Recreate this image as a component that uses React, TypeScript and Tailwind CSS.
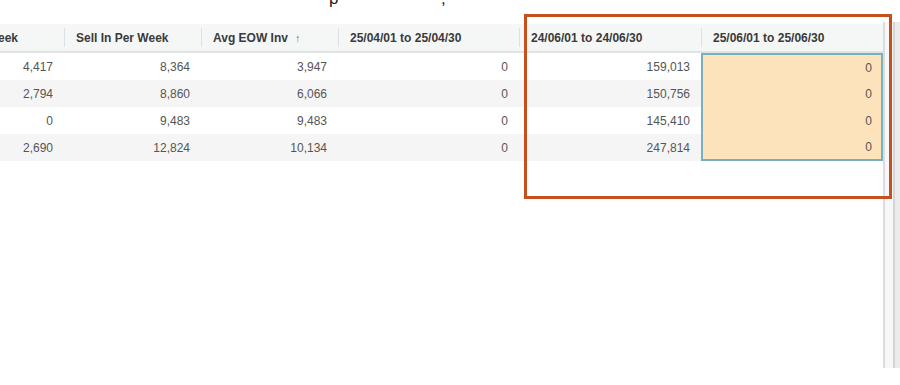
import React from "react";

type Col = { key: string; title: string; width: string };

const columns: Col[] = [
  { key: "sellOut", title: "Sell Out Per Week", width: "w-[64px]" },
  { key: "sellIn", title: "Sell In Per Week", width: "w-[137px]" },
  { key: "avgEow", title: "Avg EOW Inv", width: "w-[137px]" },
  { key: "apr25", title: "25/04/01 to 25/04/30", width: "w-[181px]" },
  { key: "jun24", title: "24/06/01 to 24/06/30", width: "w-[182px]" },
  { key: "jun25", title: "25/06/01 to 25/06/30", width: "w-[182px]" },
];

const rows = [
  ["4,417", "8,364", "3,947", "0", "159,013", "0"],
  ["2,794", "8,860", "6,066", "0", "150,756", "0"],
  ["0", "9,483", "9,483", "0", "145,410", "0"],
  ["2,690", "12,824", "10,134", "0", "247,814", "0"],
];

export default function App() {
  return (
    <div className="relative w-[900px] h-[385px] overflow-hidden bg-white font-['Liberation_Sans',Arial,sans-serif]">
      {/* caption above the grid, mostly scrolled out of view */}
      <div className="absolute top-[-14px] left-[329px] text-[17px] text-[#222]">p</div>
      <div className="absolute top-[-14px] left-[441px] text-[17px] text-[#222]">,</div>

      <div className="flex pt-[22px] h-[368px]">
        <div className="w-[883px] pt-[2px]">
          <div className="flex h-[29px] bg-[#f5f7f7] border-b-2 border-[#dfe3e3] text-[12px] font-bold text-[#3a3a3a]">
            {columns.map((c, i) => (
              <div key={c.key} className={`${c.width} flex items-center shrink-0 overflow-hidden`}>
                {i === 0 ? (
                  <div className="flex w-full justify-end pr-[46px] whitespace-nowrap">{c.title}</div>
                ) : (
                  <>
                    <div className="w-px h-[19px] bg-[#dde1e1] shrink-0" />
                    <span className="ml-[11px] whitespace-nowrap">
                      {c.title}
                      {c.key === "avgEow" && <span className="ml-[7px] text-[11px] font-normal text-[#777]">↑</span>}
                    </span>
                  </>
                )}
              </div>
            ))}
          </div>

          {rows.map((r, ri) => (
            <div key={ri} className={`flex h-[27px] text-[12px] text-[#555] ${ri % 2 === 1 ? "bg-[#f5f5f5]" : "bg-white"}`}>
              {r.map((v, ci) => {
                const selected = ci === 5;
                let sel = "";
                if (selected) {
                  sel = "bg-[#fde3bb] border-x-2 border-[#79b0c0]";
                  if (ri === 0) sel += " border-t-2";
                  if (ri === rows.length - 1) sel += " border-b-2";
                }
                return (
                  <div
                    key={ci}
                    className={`${columns[ci].width} shrink-0 flex items-center justify-end ${selected ? "pr-[9px]" : "pr-[11px]"} ${sel}`}
                  >
                    {v}
                  </div>
                );
              })}
            </div>
          ))}
        </div>

        {/* vertical scrollbar */}
        <div className="flex w-[17px]">
          <div className="w-[2px] bg-[#dcdcdc]" />
          <div className="w-[8px] bg-[#f6f7f9]" />
          <div className="w-[2px] bg-[#d6d6d6]" />
          <div className="w-[5px] bg-[#ebebeb]" />
        </div>
      </div>

      {/* annotation */}
      <div className="absolute left-[524px] top-[14px] w-[368px] h-[185px] border-[3px] border-[#c4501d]" />
    </div>
  );
}
